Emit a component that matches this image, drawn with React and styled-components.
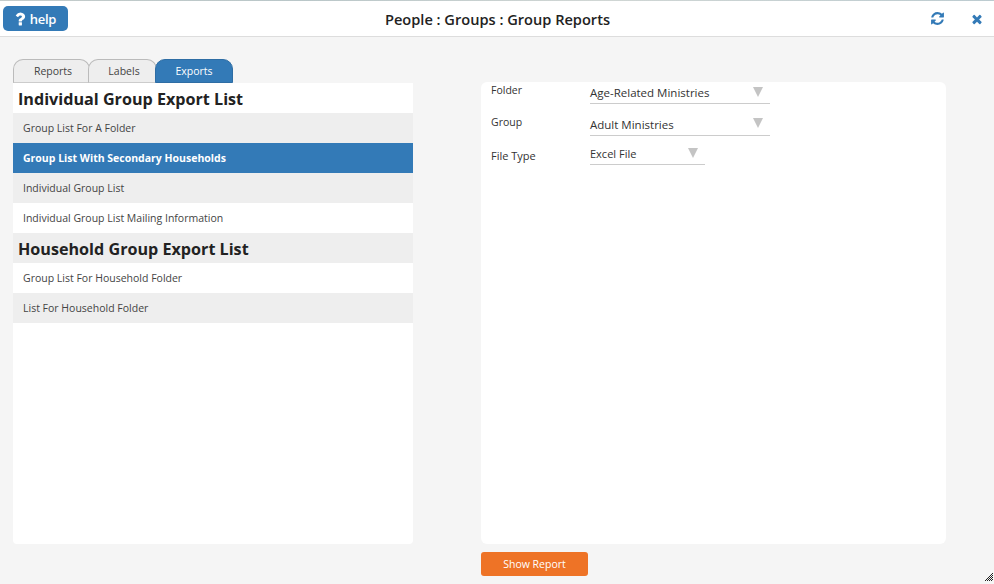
import React from 'react';
import styled, { createGlobalStyle } from 'styled-components';

const GlobalStyle = createGlobalStyle`
  html, body {
    margin: 0;
    padding: 0;
    height: 100%;
    background: #f5f5f5;
    font-family: "Open Sans", "Noto Sans", sans-serif;
    color: #333;
  }
  * { box-sizing: border-box; }
`;

const Page = styled.div`
  width: 994px;
  height: 584px;
  position: relative;
  overflow: hidden;
  background: #f5f5f5;
`;

const TopStrip = styled.div`
  height: 1px;
  background: linear-gradient(90deg, #c4cccb, #b9c6c8 30%, #d0d6d4 60%, #bccbd0);
`;

const Header = styled.header`
  height: 36px;
  background: #fff;
  border-bottom: 1px solid #ddd;
  display: grid;
  grid-template-columns: 200px 1fr 200px;
  align-items: center;
  padding: 0 10px 0 3px;
`;

const HelpButton = styled.button`
  justify-self: start;
  width: 65px;
  height: 25px;
  padding: 0 4px 0 0;
  border: none;
  border-radius: 5px;
  background: #337ab7;
  color: #fff;
  font-family: inherit;
  font-size: 13px;
  font-weight: 600;
  letter-spacing: -0.3px;
  display: flex;
  align-items: center;
  justify-content: center;
  gap: 1px;
`;

const Title = styled.h1`
  margin: 0 0 0 8px;
  text-align: center;
  font-size: 14.6px;
  font-weight: 600;
  color: #222;
`;

const HeaderIcons = styled.div`
  justify-self: end;
  display: flex;
  align-items: center;
  gap: 25px;
  color: #337ab7;
`;

const Main = styled.main`
  display: flex;
  padding: 22px 0 0 13px;
`;

const LeftColumn = styled.section`
  width: 400px;
  display: flex;
  flex-direction: column;
`;

const TabBar = styled.div`
  display: flex;
  height: 24px;
`;

const Tab = styled.div`
  width: ${p => p.$width}px;
  margin-left: ${p => (p.$first ? 0 : -2)}px;
  padding-left: ${p => (p.$active ? 0 : 3)}px;
  display: flex;
  align-items: center;
  justify-content: center;
  font-size: 10.5px;
  border: 1px solid ${p => (p.$active ? '#2e6da4' : '#bbb')};
  border-bottom: 1px solid ${p => (p.$active ? '#2e6da4' : '#ccc')};
  border-radius: 10px 10px 0 0;
  background: ${p => (p.$active ? '#337ab7' : '#eee')};
  color: ${p => (p.$active ? '#fff' : '#444')};
`;

const ListPanel = styled.div`
  height: 461px;
  background: #fff;
  border-radius: 0 0 4px 4px;
  overflow: hidden;
`;

const ListHeading = styled.h2`
  margin: 0;
  height: 30px;
  padding: 2px 0 0 5px;
  display: flex;
  align-items: center;
  font-size: 16.15px;
  font-weight: 700;
  color: #222;
  background: ${p => (p.$shaded ? '#eee' : '#fff')};
`;

const ListRow = styled.div`
  height: 30px;
  padding-left: 10px;
  display: flex;
  align-items: center;
  font-size: 10.5px;
  font-weight: ${p => (p.$selected ? 700 : 400)};
  color: ${p => (p.$selected ? '#fff' : '#444')};
  background: ${p => (p.$selected ? '#337ab7' : p.$shaded ? '#eee' : '#fff')};
`;

const RightColumn = styled.section`
  width: 465px;
  margin-left: 68px;
  padding-top: 23px;
  display: flex;
  flex-direction: column;
  align-items: flex-start;
`;

const FormPanel = styled.div`
  width: 465px;
  height: 462px;
  padding-left: 10px;
  background: #fff;
  border-radius: 6px;
`;

const FormRow = styled.div`
  display: flex;
  align-items: flex-start;
  height: 32px;
`;

const FieldLabel = styled.label`
  width: 99px;
  padding-top: ${p => p.$top}px;
  font-size: ${p => p.$size}px;
  line-height: 14px;
  color: #333;
`;

const SelectBox = styled.div`
  position: relative;
  width: ${p => p.$width}px;
  height: ${p => p.$height}px;
  padding-top: ${p => p.$pad}px;
  border-bottom: 1px solid #ccc;
  font-size: ${p => p.$size}px;
  line-height: 16px;
  color: #333;
`;

const Arrow = styled.span`
  position: absolute;
  right: 7px;
  top: ${p => p.$top}px;
  width: 0;
  height: 0;
  border-left: 5px solid transparent;
  border-right: 5px solid transparent;
  border-top: 10px solid #c4c4c4;
`;

const ShowReport = styled.button`
  width: 107px;
  height: 24px;
  margin-top: 8px;
  padding: 0;
  border: none;
  border-radius: 3px;
  background: #ee7326;
  color: #fff;
  font-family: inherit;
  font-size: 10.5px;
`;

const Grip = styled.svg`
  position: absolute;
  right: 1px;
  bottom: 3px;
`;

const Icon = ({ size, d }) => (
  <svg width={size} height={size} viewBox="0 0 1792 1792" fill="currentColor">
    <path d={d} />
  </svg>
);

const questionPath = 'M1088 1256v240q0 16-12 28t-28 12h-240q-16 0-28-12t-12-28v-240q0-16 12-28t28-12h240q16 0 28 12t12 28zm316-600q0 54-15.500 101t-35 76.500-55 59.500-57.500 43.500-61 35.500q-41 23-68.500 65t-27.500 67q0 17-12 32.500t-28 15.500h-240q-15 0-25.500-18.500t-10.500-37.500v-45q0-83 65-156.500t143-108.500q59-27 84-56t25-76q0-42-46.500-74t-107.500-32q-65 0-108 29-35 25-107 115-13 16-31 16-12 0-25-8l-164-125q-13-10-15.500-25t5.500-28q160-266 464-266 80 0 161 31t146 83 106 127.500 41 158.500z';
const refreshPath = 'M1639 1056q0 5-1 7-64 268-268 434.500t-478 166.500q-146 0-282.500-55t-243.500-157l-129 129q-19 19-45 19t-45-19-19-45v-448q0-26 19-45t45-19h448q26 0 45 19t19 45-19 45l-137 137q71 66 161 102t187 36q134 0 250-65t186-179q11-17 53-117 8-23 30-23h192q13 0 22.500 9.500t9.500 22.500zm25-800v448q0 26-19 45t-45 19h-448q-26 0-45-19t-19-45 19-45l138-138q-148-137-349-137-134 0-250 65t-186 179q-11 17-53 117-8 23-30 23h-199q-13 0-22.500-9.500t-9.500-22.500v-7q65-268 270-434.500t480-166.500q146 0 284 55.500t245 156.500l130-129q19-19 45-19t45 19 19 45z';
const timesPath = 'M1490 1322q0 40-28 68l-136 136q-28 28-68 28t-68-28l-294-294-294 294q-28 28-68 28t-68-28l-136-136q-28-28-28-68t28-68l294-294-294-294q-28-28-28-68t28-68l136-136q28-28 68-28t68 28l294 294 294-294q28-28 68-28t68 28l136 136q28 28 28 68t-28 68l-294 294 294 294q28 28 28 68z';

const App = () => (
  <Page>
    <GlobalStyle />
    <TopStrip />
    <Header>
      <HelpButton>
        <Icon size={18} d={questionPath} />
        help
      </HelpButton>
      <Title>People : Groups : Group Reports</Title>
      <HeaderIcons>
        <Icon size={15} d={refreshPath} />
        <Icon size={14} d={timesPath} />
      </HeaderIcons>
    </Header>
    <Main>
      <LeftColumn>
        <TabBar>
          <Tab $width={77} $first>Reports</Tab>
          <Tab $width={69}>Labels</Tab>
          <Tab $width={78} $active>Exports</Tab>
        </TabBar>
        <ListPanel>
          <ListHeading>Individual Group Export List</ListHeading>
          <ListRow $shaded>Group List For A Folder</ListRow>
          <ListRow $selected>Group List With Secondary Households</ListRow>
          <ListRow $shaded>Individual Group List</ListRow>
          <ListRow>Individual Group List Mailing Information</ListRow>
          <ListHeading $shaded>Household Group Export List</ListHeading>
          <ListRow>Group List For Household Folder</ListRow>
          <ListRow $shaded>List For Household Folder</ListRow>
        </ListPanel>
      </LeftColumn>
      <RightColumn>
        <FormPanel>
          <FormRow>
            <FieldLabel $top={1} $size={10.5}>Folder</FieldLabel>
            <SelectBox $width={180} $height={22} $pad={3} $size={11.5}>
              Age-Related Ministries
              <Arrow $top={5} />
            </SelectBox>
          </FormRow>
          <FormRow>
            <FieldLabel $top={1} $size={10.5}>Group</FieldLabel>
            <SelectBox $width={180} $height={22} $pad={3} $size={11.5}>
              Adult Ministries
              <Arrow $top={4} />
            </SelectBox>
          </FormRow>
          <FormRow>
            <FieldLabel $top={3} $size={11}>File Type</FieldLabel>
            <SelectBox $width={115} $height={19} $pad={0} $size={11}>
              Excel File
              <Arrow $top={2} />
            </SelectBox>
          </FormRow>
        </FormPanel>
        <ShowReport>Show Report</ShowReport>
      </RightColumn>
    </Main>
    <Grip width="8" height="8" viewBox="0 0 8 8" shapeRendering="crispEdges">
      <path d="M7 0h1v1h-1zM5 2h1v1h-1zM7 2h1v1h-1zM3 4h1v1h-1zM5 4h1v1h-1zM7 4h1v1h-1zM1 6h1v1h-1zM3 6h1v1h-1zM5 6h1v1h-1zM7 6h1v1h-1zM6 1h1v1h-1zM4 3h1v1h-1zM6 3h1v1h-1zM2 5h1v1h-1zM4 5h1v1h-1zM6 5h1v1h-1zM0 7h1v1h-1zM2 7h1v1h-1zM4 7h1v1h-1zM6 7h1v1h-1z" fill="#222" />
    </Grip>
  </Page>
);

export default App;
